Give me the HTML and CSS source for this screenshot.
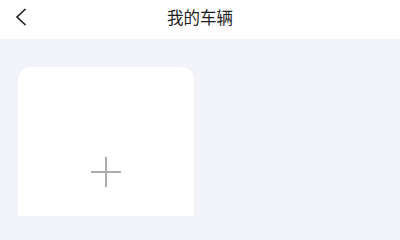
FILE: index.html
```html
<!DOCTYPE html>
<html lang="zh">
<head>
<meta charset="utf-8">
<link rel="stylesheet" href="styles.css">
</head>
<body>
<header class="nav">
  <span class="back">
    <svg width="12" height="18" viewBox="0 0 12 18"><path d="M10.5 1 L2 9 L10.5 17" fill="none" stroke="#1a1a1a" stroke-width="1.6"/></svg>
  </span>
  <h1 class="title">我的车辆</h1>
</header>
<main class="content">
  <div class="card">
    <svg class="plus" width="32" height="32" viewBox="0 0 32 32"><path d="M16 1 V31 M1 16 H31" stroke="#acacac" stroke-width="2"/></svg>
  </div>
</main>
</body>
</html>
```
FILE: styles.css
```css
html, body { margin: 0; padding: 0; overflow: hidden; }
html { background: #f3f4f9; }
body {
  width: 400px; height: 216px;
  background: #f3f4f9;
  font-family: "Noto Sans CJK SC", "Noto Sans", sans-serif;
  display: flex; flex-direction: column;
}
.nav {
  height: 39px; flex: none; background: #fff; position: relative;
  display: flex; align-items: center; justify-content: center;
}
.back { position: absolute; left: 15px; top: 8px; width: 12px; height: 18px; display: block; }
.back svg { display: block; }
.title { margin: 0; font-size: 16.5px; font-weight: 400; color: #1e1e1e; line-height: 1; margin-top: -4px; }
.content { flex: 1; min-height: 0; padding: 28px 18px 0; display: flex; }
.card {
  width: 176px; background: #fff; border-radius: 12px 12px 0 0;
  display: flex; justify-content: center; align-items: flex-start; padding-top: 89px; box-sizing: border-box;
}
.plus { display: block; }
```
